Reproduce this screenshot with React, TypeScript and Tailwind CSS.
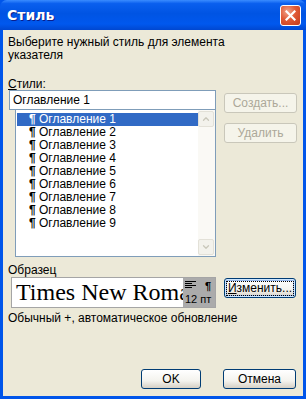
import { ChevronUp, ChevronDown } from "lucide-react";

const items = [1, 2, 3, 4, 5, 6, 7, 8, 9];

const XpButton = ({
  label,
  disabled,
  focused,
  width,
  underline,
}: {
  label: string;
  disabled?: boolean;
  focused?: boolean;
  width: string;
  underline?: boolean;
}) => {
  if (disabled) {
    return (
      <div
        className={`${width} h-[20px] rounded-[3px] border border-[#C9C7BA] bg-[#F5F4EA] flex items-center justify-center text-[#ACA899]`}
      >
        {label}
      </div>
    );
  }
  return (
    <div
      className={`${width} h-[20px] rounded-[3px] border border-[#003C74] bg-[linear-gradient(to_bottom,#FFFFFF_0%,#F4F3EE_60%,#D6D0C5_100%)] flex items-center justify-center text-black ${
        focused ? "shadow-[inset_0_0_0_1px_#CEE7FF,inset_0_0_0_2px_#98B8EA]" : ""
      }`}
    >
      {underline ? (
        <span className="outline-1 outline-dotted outline-black px-[1px] leading-[13px]">
          <span className="underline">И</span>
          {label.slice(1)}
        </span>
      ) : (
        label
      )}
    </div>
  );
};

export default function App() {
  return (
    <div className="w-[306px] h-[399px] flex flex-col bg-[#0055EA] text-[12px] leading-[13px] font-['Liberation_Sans',Arial,sans-serif] overflow-hidden">
      {/* title bar */}
      <div className="h-[30px] shrink-0 flex items-center justify-between pl-[7px] pr-[5px] bg-[linear-gradient(to_bottom,#3A8CFF_0%,#0A5FEE_12%,#0054E3_45%,#0058EE_80%,#0047D0_100%)] rounded-t-[7px]">
        <span className="text-white font-bold text-[14px] font-['DejaVu_Sans',sans-serif] [text-shadow:1px_1px_0_#0A1E8C]">
          Стиль
        </span>
        <div className="w-[21px] h-[21px] rounded-[3px] border border-white bg-[radial-gradient(circle_at_35%_30%,#F0A48C_0%,#E05A36_45%,#C43A1A_100%)] flex items-center justify-center">
          <svg width="11" height="11" viewBox="0 0 11 11">
            <path d="M1.5 1.5 L9.5 9.5 M9.5 1.5 L1.5 9.5" stroke="white" strokeWidth="2.2" strokeLinecap="square" />
          </svg>
        </div>
      </div>

      {/* client */}
      <div className="flex-1 mx-[3px] mb-[3px] bg-[#ECE9D8] flex flex-col pl-[5px] pr-[7px] pt-[6px] pb-[7px] text-black">
        <p>
          Выберите нужный стиль для элемента
          <br />
          указателя
        </p>
        <div className="mt-[16px] h-[12px] leading-[12px]">
          <span className="underline">С</span>тили:
        </div>

        <div className="flex">
          <div className="ml-[1px] flex flex-col">
            <div className="w-[207px] h-[20px] border border-[#7F9DB9] bg-white flex items-center pl-[3px]">
              Оглавление 1
            </div>
            <div className="ml-[6px] w-[201px] h-[147px] border border-[#7F9DB9] border-t-0 bg-white flex">
              <div className="flex-1 pt-[3px] pl-[1px]">
                {items.map((n) => (
                  <div
                    key={n}
                    className={`h-[13px] flex items-center pl-[12px] ${
                      n === 1 ? "bg-[#316AC5] text-white" : ""
                    }`}
                  >
                    <span className="font-bold w-[10px]">¶</span>
                    <span>Оглавление {n}</span>
                  </div>
                ))}
              </div>
              <div className="w-[17px] bg-[#FAF9F5] flex flex-col justify-between py-[1px] pr-[1px]">
                <div className="h-[16px] rounded-[2px] border border-[#E3E1D8] bg-[#F3F2EC] flex items-center justify-center">
                  <ChevronUp size={10} strokeWidth={3} color="#C9C7BA" />
                </div>
                <div className="h-[16px] rounded-[2px] border border-[#E3E1D8] bg-[#F3F2EC] flex items-center justify-center">
                  <ChevronDown size={10} strokeWidth={3} color="#C9C7BA" />
                </div>
              </div>
            </div>
          </div>
          <div className="ml-[8px] pt-[3px] flex flex-col gap-[10px]">
            <XpButton label="Создать..." disabled width="w-[73px]" />
            <XpButton label="Удалить" disabled width="w-[73px]" />
          </div>
        </div>

        <div className="mt-[7px]">Образец</div>
        <div className="flex items-start">
          <div className="ml-[3px] w-[205px] h-[31px] border border-[#A5A5A5] bg-white flex overflow-hidden">
            <div className="w-[171px] overflow-hidden whitespace-nowrap pl-[4px] text-[24px] leading-[29px] font-['Liberation_Serif','Times_New_Roman',serif]">
              Times New Roma
            </div>
            <div className="w-[32px] bg-[#ABABAB] flex flex-col pl-[2px] pt-[3px] text-[11px]">
              <div className="flex items-start justify-between pr-[4px]">
                <svg width="11" height="7" viewBox="0 0 11 7">
                  <path d="M0 0.5H11M0 2.5H7M0 4.5H11M0 6.5H7" stroke="#000" strokeWidth="1" />
                </svg>
                <span className="font-bold leading-[10px]">¶</span>
              </div>
              <div className="mt-[2px] leading-[12px]">12 пт</div>
            </div>
          </div>
          <div className="ml-[8px] mt-[1px]">
            <XpButton label="Изменить..." focused underline width="w-[72px]" />
          </div>
        </div>

        <div className="mt-[4px]">Обычный +, автоматическое обновление</div>

        <div className="mt-auto flex justify-end gap-[22px]">
          <XpButton label="OK" width="w-[60px]" />
          <XpButton label="Отмена" width="w-[73px]" />
        </div>
      </div>
    </div>
  );
}
